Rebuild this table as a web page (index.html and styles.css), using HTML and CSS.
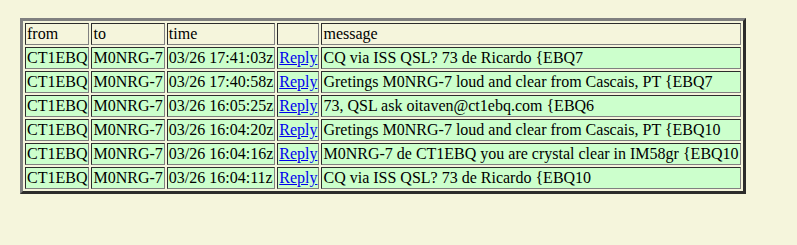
FILE: index.html
```html
<!DOCTYPE html>
<html>
<head>
<meta charset="utf-8">
<link rel="stylesheet" href="styles.css">
</head>
<body>
<table class="msgs">
<tr class="head"><td>from</td><td>to</td><td>time</td><td></td><td>message</td></tr>
<tr class="row"><td>CT1EBQ</td><td>M0NRG-7</td><td>03/26 17:41:03z</td><td><a href="#">Reply</a></td><td>CQ via ISS QSL? 73 de Ricardo {EBQ7</td></tr>
<tr class="row"><td>CT1EBQ</td><td>M0NRG-7</td><td>03/26 17:40:58z</td><td><a href="#">Reply</a></td><td>Gretings M0NRG-7 loud and clear from Cascais, PT {EBQ7</td></tr>
<tr class="row"><td>CT1EBQ</td><td>M0NRG-7</td><td>03/26 16:05:25z</td><td><a href="#">Reply</a></td><td>73, QSL ask oitaven@ct1ebq.com {EBQ6</td></tr>
<tr class="row"><td>CT1EBQ</td><td>M0NRG-7</td><td>03/26 16:04:20z</td><td><a href="#">Reply</a></td><td>Gretings M0NRG-7 loud and clear from Cascais, PT {EBQ10</td></tr>
<tr class="row"><td>CT1EBQ</td><td>M0NRG-7</td><td>03/26 16:04:16z</td><td><a href="#">Reply</a></td><td>M0NRG-7 de CT1EBQ you are crystal clear in IM58gr {EBQ10</td></tr>
<tr class="row"><td>CT1EBQ</td><td>M0NRG-7</td><td>03/26 16:04:11z</td><td><a href="#">Reply</a></td><td>CQ via ISS QSL? 73 de Ricardo {EBQ10</td></tr>
</table>
</body>
</html>
```
FILE: styles.css
```css
body {
  margin: 0;
  padding: 18px 20px;
  background: #f5f5dc;
  font-family: "Liberation Serif", "Times New Roman", serif;
  font-size: 16px;
  color: #000;
}
.msgs {
  border: 3px outset gray;
  border-spacing: 2px;
}
.msgs td {
  border: 1px inset gray;
  padding: 1px;
  white-space: nowrap;
}
.row td {
  background: #ccffcc;
}
.msgs a {
  color: #0000ee;
}
```
